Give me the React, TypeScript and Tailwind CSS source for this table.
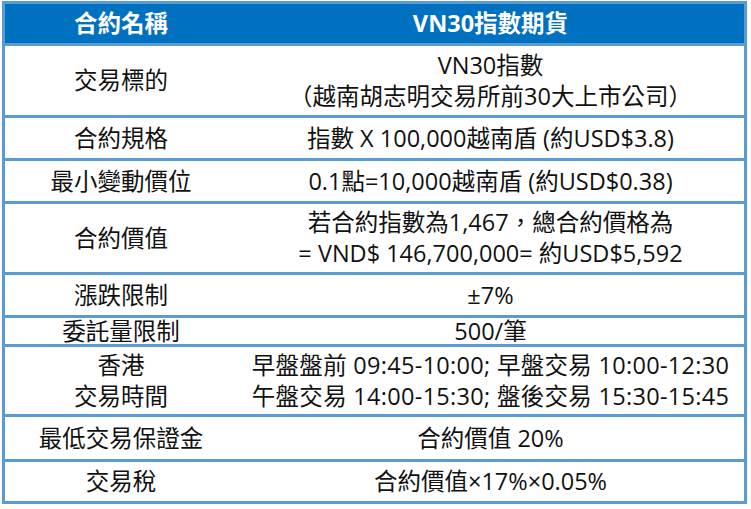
const font = { fontFamily: '"Open Sans", "Noto Sans CJK TC", sans-serif' }

type Row = {
  label: string[]
  value: string[]
  h: string
  valueClass?: string
  align?: string
}

const rows: Row[] = [
  {
    label: ['交易標的'],
    value: ['VN30指數', '（越南胡志明交易所前30大上市公司）'],
    h: 'h-[72px]',
    valueClass: 'leading-[29px]',
  },
  { label: ['合約規格'], value: ['指數 X 100,000越南盾 (約USD$3.8)'], h: 'h-[43px]' },
  { label: ['最小變動價位'], value: ['0.1點=10,000越南盾 (約USD$0.38)'], h: 'h-[43px]' },
  {
    label: ['合約價值'],
    value: ['若合約指數為1,467，總合約價格為', '= VND$ 146,700,000= 約USD$5,592'],
    h: 'h-[71px]',
  },
  { label: ['漲跌限制'], value: ['±7%'], h: 'h-[43px]' },
  { label: ['委託量限制'], value: ['500/筆'], h: 'h-[29px]', align: 'items-end' },
  {
    label: ['香港', '交易時間'],
    value: ['早盤盤前 09:45-10:00; 早盤交易 10:00-12:30', '午盤交易 14:00-15:30; 盤後交易 15:30-15:45'],
    h: 'h-[70px]',
    valueClass: 'tracking-[0.3px]',
  },
  { label: ['最低交易保證金'], value: ['合約價值 20%'], h: 'h-[45px]' },
  { label: ['交易稅'], value: ['合約價值×17%×0.05%'], h: 'h-[42px]' },
]

function Cell({ lines, className = '' }: { lines: string[]; className?: string }) {
  return (
    <div className={`flex flex-col items-center justify-center text-center leading-[31px] ${className}`}>
      {lines.map((l) => (
        <span key={l} className="whitespace-nowrap">
          {l}
        </span>
      ))}
    </div>
  )
}

export default function App() {
  return (
    <div className="w-[751px] h-[509px] bg-white pt-[1px] pl-[2px]" style={font}>
      <div className="w-[745px] border-[3px] border-[#5b9bd5] text-[23.5px] text-[#111]">
        {/* Header */}
        <div className="flex h-[39px] bg-[#0070c0] text-white font-bold">
          <div className="w-[232px] flex items-center justify-center">合約名稱</div>
          <div className="flex-1 flex items-center justify-center">VN30指數期貨</div>
        </div>

        {rows.map((r, i) => (
          <div key={i} className={`flex border-t-[3px] border-[#5b9bd5] ${r.h}`}>
            <div className={`w-[232px] flex justify-center ${r.align ?? 'items-center'}`}>
              <Cell lines={r.label} className={r.align ? '!leading-[26px]' : ''} />
            </div>
            <div className={`flex-1 flex justify-center ${r.align ?? 'items-center'}`}>
              <Cell lines={r.value} className={`${r.valueClass ?? ''} ${r.align ? '!leading-[26px]' : ''}`} />
            </div>
          </div>
        ))}
      </div>
    </div>
  )
}
